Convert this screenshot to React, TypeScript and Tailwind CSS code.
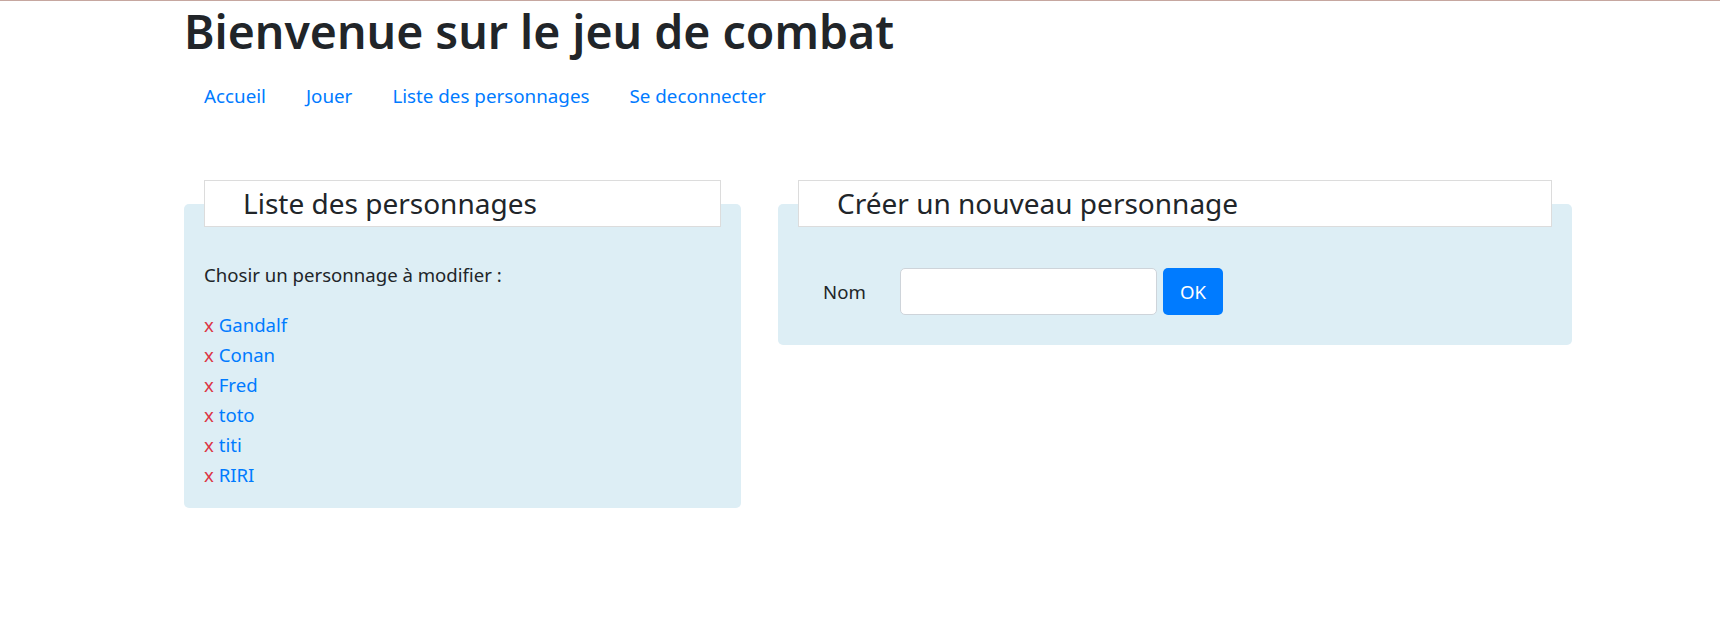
import React from 'react';

const personnages = ['Gandalf', 'Conan', 'Fred', 'toto', 'titi', 'RIRI'];
const liens = ['Accueil', 'Jouer', 'Liste des personnages', 'Se deconnecter'];

export default function App() {
  return (
    <div className="min-h-screen border-t border-[#c6a7a0] bg-white font-['Noto_Sans',sans-serif] text-[18.6px] leading-[30px] text-[#212529]">
      <div className="ml-[184px] w-[1388px]">
        <h1 className="mb-[10px] text-[46.4px] font-semibold leading-[60px]">Bienvenue sur le jeu de combat</h1>
        <nav className="flex text-[18.8px]">
          {liens.map((l) => (
            <a key={l} href="#" className="px-[20px] py-[10px] text-[#007bff]">
              {l}
            </a>
          ))}
        </nav>

        <div className="mt-[83px] flex items-start gap-[37px]">
          {/* liste */}
          <div className="w-[557px] rounded-[5px] bg-[#ddeef5] pb-[18px]">
            <h4 className="-mt-[24px] mx-[20px] mb-[33px] h-[47px] border border-[#dcdcdc] bg-white pl-[38px] text-[28px] leading-[45px]">
              Liste des personnages
            </h4>
            <div className="px-[20px]">
              <p className="mb-[20px]">Chosir un personnage à modifier :</p>
              <ul>
                {personnages.map((p) => (
                  <li key={p}>
                    <span className="text-[#dc3545]">x</span>{' '}
                    <a href="#" className="text-[#007bff]">
                      {p}
                    </a>
                  </li>
                ))}
              </ul>
            </div>
          </div>

          {/* création */}
          <div className="w-[794px] rounded-[5px] bg-[#ddeef5] pb-[30px]">
            <h4 className="-mt-[24px] mx-[20px] mb-[41px] h-[47px] border border-[#dcdcdc] bg-white pl-[38px] text-[28px] leading-[45px]">
              Créer un nouveau personnage
            </h4>
            <form className="flex items-center pl-[45px]" onSubmit={(e) => e.preventDefault()}>
              <label className="w-[77px]">Nom</label>
              <input
                type="text"
                className="h-[47px] w-[257px] rounded-[5px] border border-[#ced4da] bg-white px-[15px] outline-none"
              />
              <button className="ml-[6px] h-[47px] w-[60px] rounded-[5px] bg-[#007bff] text-white">OK</button>
            </form>
          </div>
        </div>
      </div>
    </div>
  );
}
